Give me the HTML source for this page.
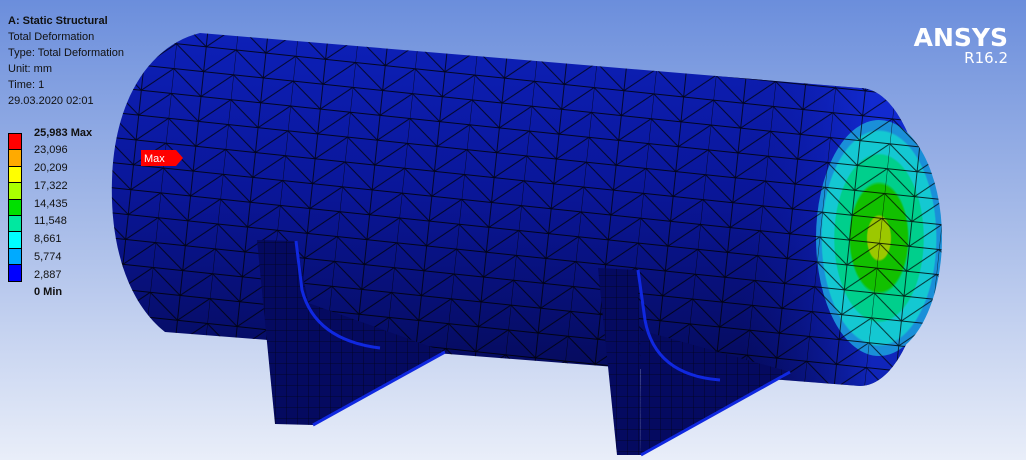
<!DOCTYPE html>
<html><head><style>
body{margin:0;width:1026px;height:460px;overflow:hidden;background:linear-gradient(#6b8edc,#a9bde9 50%,#e9eef9);font-family:"Liberation Sans",sans-serif;position:relative}
.t{position:absolute;left:8px;font-size:11px;color:#111;line-height:16px}
.lg{position:absolute;left:8px;top:133px}
.lg div{width:14px;height:16.4px;border:1px solid #000;border-top:none;box-sizing:border-box}
.lv{position:absolute;left:34px;font-size:11px;color:#111}
</style></head><body>
<svg width="1026" height="460" style="position:absolute;left:0;top:0">
<defs>
<pattern id="m" width="60" height="50" patternUnits="userSpaceOnUse" patternTransform="rotate(6)">
<path d="M0 0L60 0M0 25L60 25M0 0L30 25L60 0M0 25L30 50L60 25M30 0L30 50M0 0L0 50M0 50L60 50" stroke="#000" stroke-width="0.9" fill="none" opacity="0.8"/>
</pattern>
<pattern id="g" width="11" height="11" patternUnits="userSpaceOnUse">
<path d="M0 0L11 0M0 0L0 11" stroke="#000" stroke-width="0.8" fill="none" opacity="0.7"/>
</pattern>
<linearGradient id="b" x1="0" y1="0" x2="0" y2="1">
<stop offset="0" stop-color="#0d20b8"/><stop offset="0.45" stop-color="#0a1698"/><stop offset="1" stop-color="#050a58"/>
</linearGradient>
<linearGradient id="r" x1="0" y1="0" x2="1" y2="0">
<stop offset="0" stop-color="#0a1698" stop-opacity="0"/><stop offset="0.6" stop-color="#1430e0"/><stop offset="1" stop-color="#1430e0"/>
</linearGradient>
<clipPath id="c"><path d="M200 33 L860 88 A66 148 0 0 1 860 386 L165 332 C125 300 110 240 112 180 C114 100 150 45 200 33Z"/></clipPath>
<radialGradient id="f" cx="0.5" cy="0.5" r="0.5">
<stop offset="0" stop-color="#9cc800"/><stop offset="0.18" stop-color="#9cc800"/><stop offset="0.2" stop-color="#12c000"/><stop offset="0.45" stop-color="#12c000"/><stop offset="0.48" stop-color="#00cf8c"/><stop offset="0.7" stop-color="#00cf8c"/><stop offset="0.72" stop-color="#14c8d2"/><stop offset="0.9" stop-color="#14c8d2"/><stop offset="0.92" stop-color="#1a8fd8"/><stop offset="1" stop-color="#1a8fd8"/>
</radialGradient>
</defs>
<path d="M200 33 L860 88 A66 148 0 0 1 860 386 L165 332 C125 300 110 240 112 180 C114 100 150 45 200 33Z" fill="url(#b)"/>
<g clip-path="url(#c)"><rect x="740" y="80" width="220" height="320" fill="url(#r)" opacity="0.7"/><rect x="100" y="20" width="900" height="380" fill="url(#m)"/></g>
<path d="M300 300 L445 352 L313 425Z" fill="#050a60"/>
<path d="M300 300 L445 352 L313 425Z" fill="url(#g)"/>
<path d="M640 330 L790 372 L641 455Z" fill="#050a60"/>
<path d="M640 330 L790 372 L641 455Z" fill="url(#g)"/>
<ellipse cx="879" cy="238" rx="63" ry="118" fill="url(#f)"/>
<ellipse cx="879" cy="238" rx="63" ry="118" fill="url(#m)"/>
<path d="M257 240 L296 241 L313 326 L313 425 L275 424Z" fill="#050a60"/>
<path d="M257 240 L296 241 L313 326 L313 425 L275 424Z" fill="url(#g)"/>
<path d="M296 241 L302 290 Q315 340 380 348" stroke="#1028e0" stroke-width="3" fill="none"/>
<path d="M313 425 L445 352" stroke="#1028e0" stroke-width="3"/>
<path d="M598 268 L638 270 L640 360 L641 455 L617 455Z" fill="#050a60"/>
<path d="M598 268 L638 270 L640 360 L641 455 L617 455Z" fill="url(#g)"/>
<path d="M638 270 L645 320 Q655 375 720 380" stroke="#1028e0" stroke-width="3" fill="none"/>
<path d="M641 455 L790 372" stroke="#1028e0" stroke-width="3"/>
<path d="M141 150 L176 150 L183 158 L176 166 L141 166Z" fill="#f00"/>
<text x="144" y="162" font-size="11" fill="#fff" font-family="Liberation Sans">Max</text>
<text x="1008" y="46" font-size="25" fill="#fff" text-anchor="end" font-family="DejaVu Sans" font-weight="bold">ANSYS</text>
<text x="1008" y="63" font-size="15" fill="#fff" text-anchor="end" font-family="DejaVu Sans">R16.2</text>
</svg>
<div class="t" style="top:13px;font-weight:bold">A: Static Structural</div>
<div class="t" style="top:29px">Total Deformation</div>
<div class="t" style="top:45px">Type: Total Deformation</div>
<div class="t" style="top:61px">Unit: mm</div>
<div class="t" style="top:77px">Time: 1</div>
<div class="t" style="top:93px">29.03.2020 02:01</div>
<div class="lg" style="border-top:1px solid #000">
<div style="background:#f00"></div><div style="background:#ffaa00"></div><div style="background:#ffff00"></div><div style="background:#aaff00"></div><div style="background:#00e000"></div><div style="background:#00e8a0"></div><div style="background:#00ffff"></div><div style="background:#00aaff"></div><div style="background:#0000ff"></div>
</div>
<div class="lv" style="top:127px;font-weight:bold">25,983 Max</div>
<div class="lv" style="top:144px">23,096</div>
<div class="lv" style="top:162px">20,209</div>
<div class="lv" style="top:180px">17,322</div>
<div class="lv" style="top:198px">14,435</div>
<div class="lv" style="top:215px">11,548</div>
<div class="lv" style="top:233px">8,661</div>
<div class="lv" style="top:251px">5,774</div>
<div class="lv" style="top:269px">2,887</div>
<div class="lv" style="top:286px;font-weight:bold">0 Min</div>
</body></html>
